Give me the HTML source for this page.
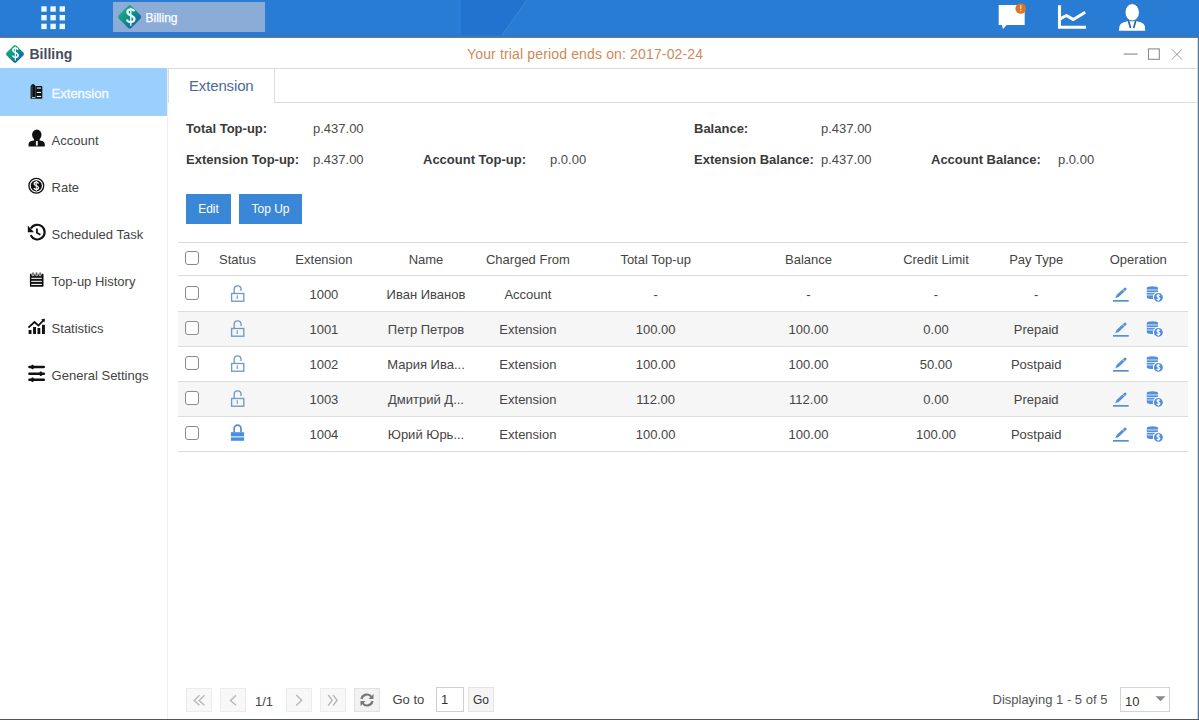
<!DOCTYPE html>
<html><head><meta charset="utf-8">
<style>
*{box-sizing:border-box;margin:0;padding:0}
html,body{width:1199px;height:720px;overflow:hidden;background:#fff;font-family:"Liberation Sans",sans-serif;color:#333}
.abs{position:absolute}
#top{left:0;top:0;width:1199px;height:38px;background:#287cd3;overflow:hidden}
#top .shade{left:0;top:35px;width:1199px;height:3px;background:linear-gradient(#2b6fc2,#5a80aa)}
#apptab{left:113px;top:2px;width:152px;height:30px;background:#8cacd8}
#apptab span{position:absolute;left:32.5px;top:9px;font-size:12px;color:#fff;-webkit-text-stroke:0.25px #fff}
#titlebar{left:0;top:38px;width:1198px;height:30px;background:#fff}
#titlebar .t{left:29.5px;top:8px;font-size:14px;font-weight:bold;color:#464d5f}
#trial{left:467px;top:8px;font-size:14px;color:#cc8b58;letter-spacing:0.15px}
#side{left:0;top:68px;width:168px;height:651px;background:#fff;border-right:1px solid #efefef}
.nav{position:absolute;left:0;width:167px;height:47px}
.nav.sel{height:48px}
.nav .lbl{position:absolute;left:51.6px;top:18px;font-size:13px;color:#444}
.nav.sel{background:#9bd0fd}
.nav.sel .lbl{color:#f4fbff;-webkit-text-stroke:0.35px #f4fbff}
.nav svg{position:absolute;left:28px;top:14px}
#main{left:168px;top:68px;width:1029px;height:651px}
#rb{left:1197px;top:38px;width:2px;height:682px;background:linear-gradient(90deg,#d3dbe4 50%,#5a7591 50%)}
#bb{left:0;top:719px;width:1199px;height:1px;background:#4f5660}
#tabstrip{left:0;top:0;width:1029px;height:35px;border-top:1px solid #dcdcdc;border-bottom:1px solid #dcdcdc;border-left:1px solid #dcdcdc}
#tab1{left:0;top:0;width:107px;height:35px;border-left:1px solid #dcdcdc;background:#fff;border-top:1px solid #dcdcdc;border-right:1px solid #dcdcdc;font-size:15px;color:#4b6d95;padding:8px 0 0 20px;letter-spacing:-0.15px}
.lab{font-size:13px;font-weight:bold;color:#3a3a3a}
.val{font-size:13px;color:#4a4a4a}
.btn{height:30px;background:#3a87d7;color:#fff;font-size:12px;text-align:center;line-height:30px}
.hline{left:178px;width:1010px;height:1px;background:#dcdcdc}
.rowbg{left:178px;width:1010px;height:34px;background:#f6f6f6}
.cb{left:185px;width:14px;height:14px;border:1.6px solid #8a8a8a;border-radius:3px;background:#fff}
.cell{width:200px;text-align:center;font-size:13px;color:#444;white-space:nowrap}
.pbtn{top:688px;width:26px;height:24px;border:1px solid #ececec;background:#f8f8f8}
.pbtn svg{position:absolute;left:-1px;top:-1px}
.ptxt{top:694px;font-size:13px;color:#444;line-height:16px}
</style></head><body>
<div id="top" class="abs">
  <svg class="abs" style="left:0;top:0" width="1199" height="38"><polygon points="461,0 527,0 500,38 461,38" fill="#2273cf"/><line x1="527" y1="0" x2="500" y2="38" stroke="#3d88d8" stroke-width="1"/></svg>
  <div class="abs shade"></div>
</div>
<div id="apptab" class="abs"><span>Billing</span></div>
<div id="titlebar" class="abs">
  <div class="abs t">Billing</div>
  <div id="trial" class="abs">Your trial period ends on: 2017-02-24</div>
</div>
<div id="side" class="abs">
  <div class="nav sel" style="top:0"><span class="lbl">Extension</span></div>
  <div class="nav" style="top:47px"><span class="lbl">Account</span></div>
  <div class="nav" style="top:94px"><span class="lbl">Rate</span></div>
  <div class="nav" style="top:141px"><span class="lbl">Scheduled Task</span></div>
  <div class="nav" style="top:188px"><span class="lbl">Top-up History</span></div>
  <div class="nav" style="top:235px"><span class="lbl">Statistics</span></div>
  <div class="nav" style="top:282px"><span class="lbl">General Settings</span></div>
</div>
<div id="main" class="abs">
  <div id="tabstrip" class="abs"></div>
  <div id="tab1" class="abs">Extension</div>
  <div class="abs lab" style="left:18px;top:53px">Total Top-up:</div>
  <div class="abs val" style="left:145px;top:53px">p.437.00</div>
  <div class="abs lab" style="left:526px;top:53px">Balance:</div>
  <div class="abs val" style="left:653px;top:53px">p.437.00</div>
  <div class="abs lab" style="left:18px;top:84px">Extension Top-up:</div>
  <div class="abs val" style="left:145px;top:84px">p.437.00</div>
  <div class="abs lab" style="left:255px;top:84px">Account Top-up:</div>
  <div class="abs val" style="left:382px;top:84px">p.0.00</div>
  <div class="abs lab" style="left:526px;top:84px">Extension Balance:</div>
  <div class="abs val" style="left:653px;top:84px">p.437.00</div>
  <div class="abs lab" style="left:763px;top:84px">Account Balance:</div>
  <div class="abs val" style="left:890px;top:84px">p.0.00</div>
  <div class="abs btn" style="left:18px;top:126px;width:45px">Edit</div>
  <div class="abs btn" style="left:71px;top:126px;width:63px">Top Up</div>
</div>
<div class="abs hline" style="top:242px"></div>
<div class="abs hline" style="top:275px"></div>
<div class="abs hline" style="top:311px"></div>
<div class="abs hline" style="top:346px"></div>
<div class="abs hline" style="top:381px"></div>
<div class="abs hline" style="top:416px"></div>
<div class="abs hline" style="top:451px"></div>
<div class="abs rowbg" style="top:312px"></div>
<div class="abs rowbg" style="top:382px"></div>
<div class="abs cb" style="top:251px"></div>
<div class="abs cell" style="left:137.5px;top:243.5px;height:32px;line-height:32px">Status</div>
<div class="abs cell" style="left:223.9px;top:243.5px;height:32px;line-height:32px">Extension</div>
<div class="abs cell" style="left:326.0px;top:243.5px;height:32px;line-height:32px">Name</div>
<div class="abs cell" style="left:427.9px;top:243.5px;height:32px;line-height:32px">Charged From</div>
<div class="abs cell" style="left:555.7px;top:243.5px;height:32px;line-height:32px">Total Top-up</div>
<div class="abs cell" style="left:708.5px;top:243.5px;height:32px;line-height:32px">Balance</div>
<div class="abs cell" style="left:836.0px;top:243.5px;height:32px;line-height:32px">Credit Limit</div>
<div class="abs cell" style="left:936.2px;top:243.5px;height:32px;line-height:32px">Pay Type</div>
<div class="abs cell" style="left:1038.3px;top:243.5px;height:32px;line-height:32px">Operation</div>
<div class="abs cb" style="top:286px"></div>
<div class="abs cell" style="left:223.9px;top:277px;height:35px;line-height:35px">1000</div>
<div class="abs cell" style="left:326.0px;top:277px;height:35px;line-height:35px">Иван Иванов</div>
<div class="abs cell" style="left:427.9px;top:277px;height:35px;line-height:35px">Account</div>
<div class="abs cell" style="left:555.7px;top:277px;height:35px;line-height:35px">-</div>
<div class="abs cell" style="left:708.5px;top:277px;height:35px;line-height:35px">-</div>
<div class="abs cell" style="left:836.0px;top:277px;height:35px;line-height:35px">-</div>
<div class="abs cell" style="left:936.2px;top:277px;height:35px;line-height:35px">-</div>
<div class="abs cb" style="top:321px"></div>
<div class="abs cell" style="left:223.9px;top:313px;height:34px;line-height:34px">1001</div>
<div class="abs cell" style="left:326.0px;top:313px;height:34px;line-height:34px">Петр Петров</div>
<div class="abs cell" style="left:427.9px;top:313px;height:34px;line-height:34px">Extension</div>
<div class="abs cell" style="left:555.7px;top:313px;height:34px;line-height:34px">100.00</div>
<div class="abs cell" style="left:708.5px;top:313px;height:34px;line-height:34px">100.00</div>
<div class="abs cell" style="left:836.0px;top:313px;height:34px;line-height:34px">0.00</div>
<div class="abs cell" style="left:936.2px;top:313px;height:34px;line-height:34px">Prepaid</div>
<div class="abs cb" style="top:356px"></div>
<div class="abs cell" style="left:223.9px;top:348px;height:34px;line-height:34px">1002</div>
<div class="abs cell" style="left:326.0px;top:348px;height:34px;line-height:34px">Мария Ива...</div>
<div class="abs cell" style="left:427.9px;top:348px;height:34px;line-height:34px">Extension</div>
<div class="abs cell" style="left:555.7px;top:348px;height:34px;line-height:34px">100.00</div>
<div class="abs cell" style="left:708.5px;top:348px;height:34px;line-height:34px">100.00</div>
<div class="abs cell" style="left:836.0px;top:348px;height:34px;line-height:34px">50.00</div>
<div class="abs cell" style="left:936.2px;top:348px;height:34px;line-height:34px">Postpaid</div>
<div class="abs cb" style="top:391px"></div>
<div class="abs cell" style="left:223.9px;top:383px;height:34px;line-height:34px">1003</div>
<div class="abs cell" style="left:326.0px;top:383px;height:34px;line-height:34px">Дмитрий Д...</div>
<div class="abs cell" style="left:427.9px;top:383px;height:34px;line-height:34px">Extension</div>
<div class="abs cell" style="left:555.7px;top:383px;height:34px;line-height:34px">112.00</div>
<div class="abs cell" style="left:708.5px;top:383px;height:34px;line-height:34px">112.00</div>
<div class="abs cell" style="left:836.0px;top:383px;height:34px;line-height:34px">0.00</div>
<div class="abs cell" style="left:936.2px;top:383px;height:34px;line-height:34px">Prepaid</div>
<div class="abs cb" style="top:426px"></div>
<div class="abs cell" style="left:223.9px;top:418px;height:34px;line-height:34px">1004</div>
<div class="abs cell" style="left:326.0px;top:418px;height:34px;line-height:34px">Юрий Юрь...</div>
<div class="abs cell" style="left:427.9px;top:418px;height:34px;line-height:34px">Extension</div>
<div class="abs cell" style="left:555.7px;top:418px;height:34px;line-height:34px">100.00</div>
<div class="abs cell" style="left:708.5px;top:418px;height:34px;line-height:34px">100.00</div>
<div class="abs cell" style="left:836.0px;top:418px;height:34px;line-height:34px">100.00</div>
<div class="abs cell" style="left:936.2px;top:418px;height:34px;line-height:34px">Postpaid</div>
<div class="abs pbtn" style="left:186px"><svg width="26" height="24" viewBox="0 0 26 24"><path d="M13.5 7.3 L8.2 12.4 L13.5 17.3 M18.4 7.3 L13.1 12.4 L18.4 17.3" fill="none" stroke="#b8b8b8" stroke-width="1.4"/></svg></div>
<div class="abs pbtn" style="left:220px"><svg width="26" height="24" viewBox="0 0 26 24"><path d="M16 7.3 L10.5 12.4 L16 17.3" fill="none" stroke="#b8b8b8" stroke-width="1.4"/></svg></div>
<div class="abs ptxt" style="left:255px">1/1</div>
<div class="abs pbtn" style="left:286px"><svg width="26" height="24" viewBox="0 0 26 24"><path d="M10.2 7 L15.7 12.2 L10.2 17.5" fill="none" stroke="#b8b8b8" stroke-width="1.4"/></svg></div>
<div class="abs pbtn" style="left:320px"><svg width="26" height="24" viewBox="0 0 26 24"><path d="M8.2 7 L12.2 12.2 L8.2 17.5 M13 7 L17.2 12.2 L13 17.5" fill="none" stroke="#b8b8b8" stroke-width="1.4"/></svg></div>
<div class="abs pbtn" style="left:354px;background:#f2f2f2;border-color:#e2e2e2"><svg width="26" height="24" viewBox="0 0 26 24"><path d="M7.5 11 A5.5 5.5 0 0 1 17.5 9" fill="none" stroke="#777" stroke-width="2.2"/><path d="M19.5 6 L19.5 11 L14.5 11 Z" fill="#777"/><path d="M18.5 13 A5.5 5.5 0 0 1 8.5 15" fill="none" stroke="#777" stroke-width="2.2"/><path d="M6.5 18 L6.5 13 L11.5 13 Z" fill="#777"/></svg></div>
<div class="abs ptxt" style="left:392.5px;top:691.5px">Go to</div>
<div class="abs" style="left:436px;top:687px;width:28px;height:25px;border:1px solid #cfcfcf;background:#fff;font-size:13px;color:#333;padding:4px 0 0 4px">1</div>
<div class="abs pbtn" style="left:468px;top:687px;height:25px;width:26px;border-color:#e4e4e4;background:#f5f5f5;font-size:12px;color:#333;text-align:center;line-height:24px">Go</div>
<div class="abs ptxt" style="left:992.5px;top:691.5px;color:#555">Displaying 1 - 5 of 5</div>
<div class="abs" style="left:1120px;top:687px;width:50px;height:25px;border:1px solid #d4d4d4;background:#fff;font-size:13px;color:#333;padding:5.5px 0 0 4px">10<svg class="abs" style="left:33.5px;top:8px" width="11" height="6" viewBox="0 0 11 6"><path d="M0.5 0.3 H10.5 L5.5 5.2 Z" fill="#8a8a8a"/></svg></div>
<svg id="ov" class="abs" style="left:0;top:0;pointer-events:none" width="1199" height="720" viewBox="0 0 1199 720">
<defs>
<linearGradient id="dg" x1="0" y1="0" x2="1" y2="0"><stop offset="0" stop-color="#17a77b"/><stop offset="0.55" stop-color="#128a8a"/><stop offset="1" stop-color="#1a6aa6"/></linearGradient>
</defs>
<!-- grid -->
<g fill="#eef8ff">
<rect x="41.3" y="6.3" width="5.4" height="5.4"/><rect x="50.4" y="6.3" width="5.4" height="5.4"/><rect x="59.6" y="6.3" width="5.4" height="5.4"/>
<rect x="41.3" y="15" width="5.4" height="5.4"/><rect x="50.4" y="15" width="5.4" height="5.4"/><rect x="59.6" y="15" width="5.4" height="5.4"/>
<rect x="41.3" y="23.7" width="5.4" height="5.4"/><rect x="50.4" y="23.7" width="5.4" height="5.4"/><rect x="59.6" y="23.7" width="5.4" height="5.4"/>
</g>
<!-- app tab logo -->
<g transform="translate(129.7 16.9)"><rect x="-8.9" y="-8.9" width="17.8" height="17.8" rx="2.6" transform="rotate(45)" fill="url(#dg)"/></g>
<path d="M134.3 11.3 C133.7 9.9 132.5 9.4 130.8 9.4 C128.8 9.4 127.4 10.6 127.4 12.3 C127.4 16 134.5 14.9 134.5 19.1 C134.5 20.9 133 22.1 130.8 22.1 C128.8 22.1 127.4 21.2 126.8 19.5" fill="none" stroke="#eaffff" stroke-width="2.2"/><path d="M130.8 7.8 V25.8" stroke="#eaffff" stroke-width="1.4"/>
<!-- title logo -->
<g transform="translate(15 54)"><rect x="-6.9" y="-6.9" width="13.8" height="13.8" rx="2" transform="rotate(45)" fill="url(#dg)"/></g>
<path d="M18 49.6 C17.5 48.5 16.6 48.1 15.4 48.1 C13.9 48.1 12.9 49 12.9 50.2 C12.9 52.9 18.1 52.1 18.1 55.2 C18.1 56.5 17 57.4 15.4 57.4 C13.9 57.4 12.9 56.7 12.5 55.5" fill="none" stroke="#eaffff" stroke-width="1.7"/><path d="M15.4 46.4 V60.4" stroke="#eaffff" stroke-width="1.2"/>
<!-- chat -->
<path d="M998.7 5 H1024.7 V25 H1006.7 L1003 29 L1001.8 25 H998.7 Z" fill="#fff"/>
<circle cx="1020.7" cy="8.5" r="5.3" fill="#dc7426"/>
<rect x="1020.1" y="5.2" width="1.3" height="3.8" fill="#f6d8b8"/><rect x="1020.1" y="10" width="1.3" height="1.3" fill="#f6d8b8"/>
<!-- chart -->
<path d="M1059.5 5.2 V27.3 H1086" fill="none" stroke="#fff" stroke-width="3.1"/>
<path d="M1060 18.9 L1066.5 15.5 L1073.4 19.6 L1085.2 12.2" fill="none" stroke="#fff" stroke-width="3" stroke-linejoin="round"/>
<!-- person -->
<path d="M1118.8 30.7 L1119.6 25.8 Q1120.3 23.2 1123.8 22.2 L1128.5 20.9 H1135.9 L1140.6 22.2 Q1144.1 23.2 1144.7 25.8 L1145.3 30.7 Z" fill="#fff"/>
<ellipse cx="1132.2" cy="12.3" rx="7.2" ry="8.7" fill="#fff" stroke="#2a6ec4" stroke-width="0.9"/>
<path d="M1128.6 21 L1130.5 28 M1135.6 21 L1133.7 28" stroke="#2b62a8" stroke-width="1.7" fill="none"/>
<!-- window controls -->
<rect x="1123.7" y="53.4" width="14" height="1.4" fill="#a0a0a0"/>
<rect x="1148.5" y="48.9" width="10.8" height="10.4" fill="none" stroke="#8c8c8c" stroke-width="1.1"/>
<path d="M1171.8 49.2 L1182 59.6 M1182 49.2 L1171.8 59.6" stroke="#999" stroke-width="1"/>
<!-- table icons -->
<g transform="translate(0 0)"><rect x="231.6" y="293.5" width="12.2" height="7.7" fill="none" stroke="#6f9ac9" stroke-width="1.35"/><path d="M234.2 293.2 V289.2 A3.4 3.4 0 0 1 241 289.2 V291" fill="none" stroke="#6f9ac9" stroke-width="1.35"/><rect x="236.7" y="295.2" width="1.1" height="3.8" fill="#6f9ac9"/><g transform="translate(1115.2 298.2) rotate(-43)"><path d="M0 0 L3.4 -1.4 H13.6 A1.4 1.4 0 0 1 13.6 1.4 H3.4 Z" fill="#5590d6"/><rect x="11.2" y="-1.6" width="0.6" height="3.2" fill="#cfe3f7"/></g><rect x="1113" y="300" width="15.7" height="1.7" fill="#5590d6"/><path d="M1146.8 288 Q1146.8 286.3 1152.4 286.3 Q1158 286.3 1158 288 V297.2 Q1158 299 1152.4 299 Q1146.8 299 1146.8 297.2 Z" fill="#5590d6"/><g fill="#d8ecff"><rect x="1146.8" y="289.5" width="11.2" height="0.9"/><rect x="1146.8" y="292" width="11.2" height="0.9"/><rect x="1146.8" y="294.5" width="11.2" height="0.9"/></g><circle cx="1158.4" cy="297.4" r="5" fill="#4f8ddb" stroke="#fff" stroke-width="1.1"/><path d="M1159.9 295.6 C1159.6 295 1159.1 294.8 1158.4 294.8 C1157.6 294.8 1157 295.2 1157 295.9 C1157 297.3 1159.9 296.9 1159.9 298.6 C1159.9 299.3 1159.2 299.8 1158.4 299.8 C1157.6 299.8 1157 299.4 1156.8 298.8" fill="none" stroke="#fff" stroke-width="1.15"/><path d="M1158.4 293.8 V300.8" stroke="#fff" stroke-width="0.8"/></g>
<g transform="translate(0 35)"><rect x="231.6" y="293.5" width="12.2" height="7.7" fill="none" stroke="#6f9ac9" stroke-width="1.35"/><path d="M234.2 293.2 V289.2 A3.4 3.4 0 0 1 241 289.2 V291" fill="none" stroke="#6f9ac9" stroke-width="1.35"/><rect x="236.7" y="295.2" width="1.1" height="3.8" fill="#6f9ac9"/><g transform="translate(1115.2 298.2) rotate(-43)"><path d="M0 0 L3.4 -1.4 H13.6 A1.4 1.4 0 0 1 13.6 1.4 H3.4 Z" fill="#5590d6"/><rect x="11.2" y="-1.6" width="0.6" height="3.2" fill="#cfe3f7"/></g><rect x="1113" y="300" width="15.7" height="1.7" fill="#5590d6"/><path d="M1146.8 288 Q1146.8 286.3 1152.4 286.3 Q1158 286.3 1158 288 V297.2 Q1158 299 1152.4 299 Q1146.8 299 1146.8 297.2 Z" fill="#5590d6"/><g fill="#d8ecff"><rect x="1146.8" y="289.5" width="11.2" height="0.9"/><rect x="1146.8" y="292" width="11.2" height="0.9"/><rect x="1146.8" y="294.5" width="11.2" height="0.9"/></g><circle cx="1158.4" cy="297.4" r="5" fill="#4f8ddb" stroke="#fff" stroke-width="1.1"/><path d="M1159.9 295.6 C1159.6 295 1159.1 294.8 1158.4 294.8 C1157.6 294.8 1157 295.2 1157 295.9 C1157 297.3 1159.9 296.9 1159.9 298.6 C1159.9 299.3 1159.2 299.8 1158.4 299.8 C1157.6 299.8 1157 299.4 1156.8 298.8" fill="none" stroke="#fff" stroke-width="1.15"/><path d="M1158.4 293.8 V300.8" stroke="#fff" stroke-width="0.8"/></g>
<g transform="translate(0 70)"><rect x="231.6" y="293.5" width="12.2" height="7.7" fill="none" stroke="#6f9ac9" stroke-width="1.35"/><path d="M234.2 293.2 V289.2 A3.4 3.4 0 0 1 241 289.2 V291" fill="none" stroke="#6f9ac9" stroke-width="1.35"/><rect x="236.7" y="295.2" width="1.1" height="3.8" fill="#6f9ac9"/><g transform="translate(1115.2 298.2) rotate(-43)"><path d="M0 0 L3.4 -1.4 H13.6 A1.4 1.4 0 0 1 13.6 1.4 H3.4 Z" fill="#5590d6"/><rect x="11.2" y="-1.6" width="0.6" height="3.2" fill="#cfe3f7"/></g><rect x="1113" y="300" width="15.7" height="1.7" fill="#5590d6"/><path d="M1146.8 288 Q1146.8 286.3 1152.4 286.3 Q1158 286.3 1158 288 V297.2 Q1158 299 1152.4 299 Q1146.8 299 1146.8 297.2 Z" fill="#5590d6"/><g fill="#d8ecff"><rect x="1146.8" y="289.5" width="11.2" height="0.9"/><rect x="1146.8" y="292" width="11.2" height="0.9"/><rect x="1146.8" y="294.5" width="11.2" height="0.9"/></g><circle cx="1158.4" cy="297.4" r="5" fill="#4f8ddb" stroke="#fff" stroke-width="1.1"/><path d="M1159.9 295.6 C1159.6 295 1159.1 294.8 1158.4 294.8 C1157.6 294.8 1157 295.2 1157 295.9 C1157 297.3 1159.9 296.9 1159.9 298.6 C1159.9 299.3 1159.2 299.8 1158.4 299.8 C1157.6 299.8 1157 299.4 1156.8 298.8" fill="none" stroke="#fff" stroke-width="1.15"/><path d="M1158.4 293.8 V300.8" stroke="#fff" stroke-width="0.8"/></g>
<g transform="translate(0 105)"><rect x="231.6" y="293.5" width="12.2" height="7.7" fill="none" stroke="#6f9ac9" stroke-width="1.35"/><path d="M234.2 293.2 V289.2 A3.4 3.4 0 0 1 241 289.2 V291" fill="none" stroke="#6f9ac9" stroke-width="1.35"/><rect x="236.7" y="295.2" width="1.1" height="3.8" fill="#6f9ac9"/><g transform="translate(1115.2 298.2) rotate(-43)"><path d="M0 0 L3.4 -1.4 H13.6 A1.4 1.4 0 0 1 13.6 1.4 H3.4 Z" fill="#5590d6"/><rect x="11.2" y="-1.6" width="0.6" height="3.2" fill="#cfe3f7"/></g><rect x="1113" y="300" width="15.7" height="1.7" fill="#5590d6"/><path d="M1146.8 288 Q1146.8 286.3 1152.4 286.3 Q1158 286.3 1158 288 V297.2 Q1158 299 1152.4 299 Q1146.8 299 1146.8 297.2 Z" fill="#5590d6"/><g fill="#d8ecff"><rect x="1146.8" y="289.5" width="11.2" height="0.9"/><rect x="1146.8" y="292" width="11.2" height="0.9"/><rect x="1146.8" y="294.5" width="11.2" height="0.9"/></g><circle cx="1158.4" cy="297.4" r="5" fill="#4f8ddb" stroke="#fff" stroke-width="1.1"/><path d="M1159.9 295.6 C1159.6 295 1159.1 294.8 1158.4 294.8 C1157.6 294.8 1157 295.2 1157 295.9 C1157 297.3 1159.9 296.9 1159.9 298.6 C1159.9 299.3 1159.2 299.8 1158.4 299.8 C1157.6 299.8 1157 299.4 1156.8 298.8" fill="none" stroke="#fff" stroke-width="1.15"/><path d="M1158.4 293.8 V300.8" stroke="#fff" stroke-width="0.8"/></g>
<g transform="translate(0 140)"><path d="M234.2 292.5 V288.6 A3.4 3.4 0 0 1 241 288.6 V292.5" fill="none" stroke="#5d8cc4" stroke-width="1.7"/><rect x="230.9" y="292.2" width="13.2" height="8.6" fill="#4a90e2"/><rect x="230.9" y="296.3" width="13.2" height="1.1" fill="#e8f6ff"/><g transform="translate(1115.2 298.2) rotate(-43)"><path d="M0 0 L3.4 -1.4 H13.6 A1.4 1.4 0 0 1 13.6 1.4 H3.4 Z" fill="#5590d6"/><rect x="11.2" y="-1.6" width="0.6" height="3.2" fill="#cfe3f7"/></g><rect x="1113" y="300" width="15.7" height="1.7" fill="#5590d6"/><path d="M1146.8 288 Q1146.8 286.3 1152.4 286.3 Q1158 286.3 1158 288 V297.2 Q1158 299 1152.4 299 Q1146.8 299 1146.8 297.2 Z" fill="#5590d6"/><g fill="#d8ecff"><rect x="1146.8" y="289.5" width="11.2" height="0.9"/><rect x="1146.8" y="292" width="11.2" height="0.9"/><rect x="1146.8" y="294.5" width="11.2" height="0.9"/></g><circle cx="1158.4" cy="297.4" r="5" fill="#4f8ddb" stroke="#fff" stroke-width="1.1"/><path d="M1159.9 295.6 C1159.6 295 1159.1 294.8 1158.4 294.8 C1157.6 294.8 1157 295.2 1157 295.9 C1157 297.3 1159.9 296.9 1159.9 298.6 C1159.9 299.3 1159.2 299.8 1158.4 299.8 C1157.6 299.8 1157 299.4 1156.8 298.8" fill="none" stroke="#fff" stroke-width="1.15"/><path d="M1158.4 293.8 V300.8" stroke="#fff" stroke-width="0.8"/></g>
<!-- sidebar icons -->
<g fill="#111">
<path d="M30.6 98.8 V86.8 C30.6 85.5 32 84 33 84 C34 84 35.4 85.5 35.4 86.8 V98.8 Z"/>
<rect x="35.2" y="86" width="7.1" height="12.8" rx="0.8"/>
</g>
<rect x="31.3" y="85.5" width="1.4" height="12" fill="#2e4a48"/>
<rect x="35.3" y="86.5" width="0.6" height="12" fill="#3a5a70"/>
<g fill="#e6f6ff"><rect x="36.8" y="87.5" width="4.3" height="1.1"/><rect x="36.8" y="91.9" width="4.3" height="1.1"/><rect x="36.8" y="95.9" width="4.3" height="1.1"/><rect x="32.2" y="97.1" width="2.6" height="1"/></g>
<g fill="#111">
<ellipse cx="36.8" cy="134.7" rx="4.7" ry="5.2"/>
<path d="M34 137 H39.6 V140.4 L41.4 140.7 C43.6 141.2 44.8 142.5 44.8 144 V146.6 H28.6 V144 C28.6 142.5 29.8 141.2 32 140.7 L34 140.4 Z"/>
</g>
<rect x="35.9" y="141" width="1.9" height="4.6" fill="#eee"/>
<circle cx="36.3" cy="185.8" r="7.4" fill="none" stroke="#111" stroke-width="1.3"/>
<circle cx="36.3" cy="185.8" r="5.6" fill="#111"/>
<path d="M38.5 183.6 C38.2 182.6 37.4 182.2 36.3 182.2 C35.1 182.2 34.2 182.9 34.2 183.9 C34.2 186 38.5 185.4 38.5 187.8 C38.5 188.8 37.6 189.5 36.3 189.5 C35.1 189.5 34.3 189 34 188" fill="none" stroke="#f4f4f4" stroke-width="1.35"/><path d="M36.3 180.9 V190.8" stroke="#f4f4f4" stroke-width="1.1"/>
<path d="M30.69 235.32 A7.35 7.35 0 1 0 30.93 228.42" fill="none" stroke="#111" stroke-width="2.1"/>
<path d="M27.8 225.6 L27.8 232.2 L34 232.2 Z" fill="#111"/>
<path d="M36.9 228.6 V232.8 L40.4 234.8" fill="none" stroke="#111" stroke-width="1.8"/>
<rect x="29.9" y="273.7" width="13.6" height="13" rx="0.7" fill="#111"/>
<g fill="#f2f2f2"><rect x="31.3" y="277.8" width="10.5" height="1.1"/><rect x="31.3" y="280.8" width="10.5" height="1.1"/><rect x="31.3" y="283.9" width="10.5" height="1.1"/></g>
<g fill="#555" stroke="#fff" stroke-width="0.7"><rect x="31.9" y="272" width="2.2" height="3.8" rx="1"/><rect x="35.5" y="272" width="2.2" height="3.8" rx="1"/><rect x="39" y="272" width="2.2" height="3.8" rx="1"/></g>
<g fill="#111"><rect x="28.6" y="330" width="2.9" height="4"/><rect x="33.1" y="327" width="2.9" height="7"/><rect x="37.5" y="328" width="2.8" height="6"/><rect x="42" y="324.8" width="2.9" height="9.2"/></g>
<path d="M28.4 327.6 L34.5 322 L38.5 325.6 L43.3 320.4" fill="none" stroke="#111" stroke-width="1.8"/>
<path d="M41.2 319.2 L44.9 318.8 L44.6 322.6 Z" fill="#111"/>
<g fill="#111"><rect x="28.2" y="365.8" width="16.8" height="2.4" rx="1.1"/><rect x="28.2" y="372.6" width="16.8" height="2.4" rx="1.1"/><rect x="28.2" y="378.6" width="16.8" height="2.4" rx="1.1"/>
<rect x="31.3" y="364.8" width="2.4" height="4.4" rx="1"/><rect x="39.6" y="371.6" width="2.4" height="4.4" rx="1"/><rect x="31.3" y="377.6" width="2.4" height="4.4" rx="1"/></g>
</svg>
<div id="rb" class="abs"></div>
<div id="bb" class="abs"></div>
</body></html>
